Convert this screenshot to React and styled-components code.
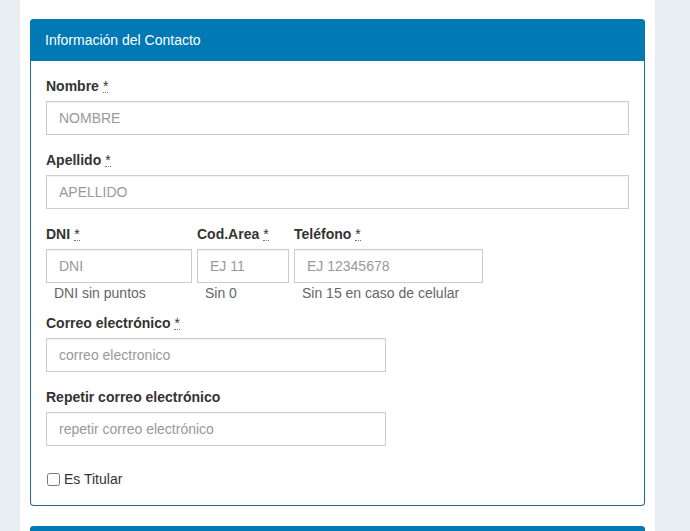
import React from "react";
import styled, { createGlobalStyle } from "styled-components";

const Global = createGlobalStyle`
  html, body { margin: 0; padding: 0; }
  body {
    background: #e9eef3;
    font-family: "Liberation Sans", Arial, sans-serif;
    font-size: 14px;
    line-height: 20px;
    color: #333;
  }
  * { box-sizing: border-box; }
`;

const Page = styled.div`
  margin-left: 20px;
  width: 635px;
  height: 531px;
  overflow: hidden;
  background: #fff;
  padding: 19px 10px 0;
`;

const Panel = styled.section`
  border: 1px solid #1f6e88;
  border-top: none;
  border-radius: 4px;
  margin-bottom: 20px;
  background: #fff;
`;

const PanelHeading = styled.div`
  background: #0079b5;
  color: #fff;
  padding: 11px 15px 10px;
  margin: 0 -1px;
  border-radius: 4px 4px 0 0;
  font-size: 14px;
  line-height: 20px;
  height: 42px;
`;

const PanelBody = styled.div`
  padding: 15px 15px 16px;
`;

const Group = styled.div`
  margin-bottom: ${(p) => (p.$mb != null ? p.$mb : 15)}px;
  width: ${(p) => p.$w || "auto"};
`;

const Label = styled.label`
  display: block;
  font-weight: bold;
  margin-bottom: 5px;
  line-height: 20px;
`;

const Req = styled.abbr`
  text-decoration: none;
  border-bottom: 1px dotted #777;
  margin-left: 4px;
  line-height: 12px;
  display: inline-block;
  font-weight: normal;
`;

const Input = styled.input`
  display: block;
  width: 100%;
  height: 34px;
  padding: 6px 12px;
  font-family: "Liberation Sans", Arial, sans-serif;
  font-size: 14px;
  color: #555;
  border: 1px solid #ccc;
  border-radius: 0;
  background: #fff;
  box-shadow: inset 0 1px 1px rgba(0, 0, 0, 0.05);
  outline: none;
  &::placeholder { color: #999; }
`;

const Row = styled.div`
  display: grid;
  grid-template-columns: 146px 92px 189px;
  column-gap: 5px;
  margin-bottom: 10px;
`;

const Help = styled.div`
  color: #666;
  padding-left: 8px;
  line-height: 20px;
`;

const CheckRow = styled.label`
  display: flex;
  align-items: center;
  margin-top: 23px;
  line-height: 20px;
  color: #333;
  input {
    margin: 0 4px 0 1px;
    width: 13px;
    height: 13px;
  }
`;

const Field = ({ label, req, placeholder, w, mb }) => (
  <Group $w={w} $mb={mb}>
    <Label>
      {label}
      {req && <Req title="requerido">*</Req>}
    </Label>
    <Input placeholder={placeholder} />
  </Group>
);

const Small = ({ label, placeholder, help }) => (
  <div>
    <Label>
      {label}
      <Req title="requerido">*</Req>
    </Label>
    <Input placeholder={placeholder} />
    <Help>{help}</Help>
  </div>
);

export default function App() {
  return (
    <>
      <Global />
      <Page>
        <Panel>
          <PanelHeading>Información del Contacto</PanelHeading>
          <PanelBody>
            <Field label="Nombre" req placeholder="NOMBRE" />
            <Field label="Apellido" req placeholder="APELLIDO" />
            <Row>
              <Small label="DNI" placeholder="DNI" help="DNI sin puntos" />
              <Small label="Cod.Area" placeholder="EJ 11" help="Sin 0" />
              <Small label="Teléfono" placeholder="EJ 12345678" help="Sin 15 en caso de celular" />
            </Row>
            <Field label="Correo electrónico" req placeholder="correo electronico" w="340px" />
            <Field label="Repetir correo electrónico" placeholder="repetir correo electrónico" w="340px" mb={0} />
            <CheckRow>
              <input type="checkbox" />
              Es Titular
            </CheckRow>
          </PanelBody>
        </Panel>
        <Panel>
          <PanelHeading />
        </Panel>
      </Page>
    </>
  );
}
